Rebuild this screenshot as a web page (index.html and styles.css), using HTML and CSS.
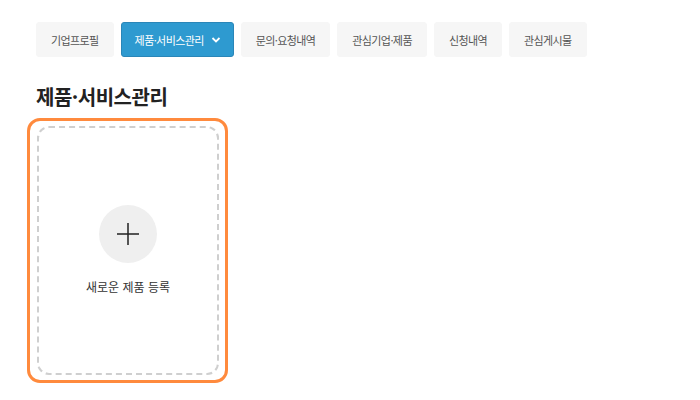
FILE: index.html
```html
<!DOCTYPE html>
<html lang="ko">
    <head>
        <meta charset="UTF-8">
        <meta name="viewport" content="width=device-width, initial-scale=1.0">
        <title>제품·서비스관리</title>
        <link rel="stylesheet" href="styles.css">
    </head>
    <body>
        <nav class="tabs">
            <a class="tab" href="#">기업프로필</a>
            <a class="tab active" href="#">제품·서비스관리
                <svg class="chev" width="10" height="10" viewBox="0 0 10 10"><path d="M1.5 3 L5 6.5 L8.5 3" fill="none" stroke="#fff" stroke-width="1.8"/></svg>
            </a>
            <a class="tab" href="#">문의·요청내역</a>
            <a class="tab" href="#">관심기업·제품</a>
            <a class="tab" href="#">신청내역</a>
            <a class="tab" href="#">관심게시물</a>
        </nav>
        <h1 class="title">제품·서비스관리</h1>
        <div class="card">
            <div class="card-inner">
                <div class="add-circle">
                    <svg width="24" height="24" viewBox="0 0 24 24"><path d="M12 1 V23 M1 12 H23" stroke="#222" stroke-width="1.5"/></svg>
                </div>
                <p class="add-label">새로운 제품 등록</p>
            </div>
        </div>
    </body>
</html>
```

FILE: styles.css
```css
body {
    font-family: "Noto Sans CJK KR", "Noto Sans", sans-serif;
    margin: 0;
    padding: 22px 0 0 36px;
    color: #222;
}
.tabs {
    display: flex;
    gap: 7px;
}
.tab {
    display: flex;
    align-items: center;
    height: 35px;
    padding: 0 14px;
    background-color: #f6f6f6;
    border: 1px solid #f6f6f6;
    border-radius: 3px;
    box-sizing: border-box;
    font-size: 11px;
    color: #555;
    text-decoration: none;
    letter-spacing: -0.6px;
}
.tab.active {
    background-color: #2e9ad0;
    border-color: #2a86b8;
    color: #fff;
    padding: 0 12px 0 13px;
}
.chev {
    margin-left: 7px;
}
.title {
    font-size: 20px;
    font-weight: 700;
    margin: 27px 0 8px 0;
    line-height: 26px;
    letter-spacing: -0.5px;
}
.card {
    width: 201px;
    height: 265px;
    box-sizing: border-box;
    margin-left: -9px;
    border: 3px solid #ff8a3d;
    border-radius: 13px;
    padding: 5px 6px 5px 7px;
}
.card-inner {
    height: 100%;
    box-sizing: border-box;
    border: 2px dashed #cfcfcf;
    border-radius: 12px;
    display: flex;
    flex-direction: column;
    align-items: center;
    justify-content: center;
}
.add-circle {
    width: 58px;
    height: 58px;
    border-radius: 50%;
    background-color: #efefef;
    display: flex;
    align-items: center;
    justify-content: center;
    margin-top: -2px;
}
.add-label {
    margin: 15px 0 0 0;
    font-size: 12px;
    color: #333;
}
```
